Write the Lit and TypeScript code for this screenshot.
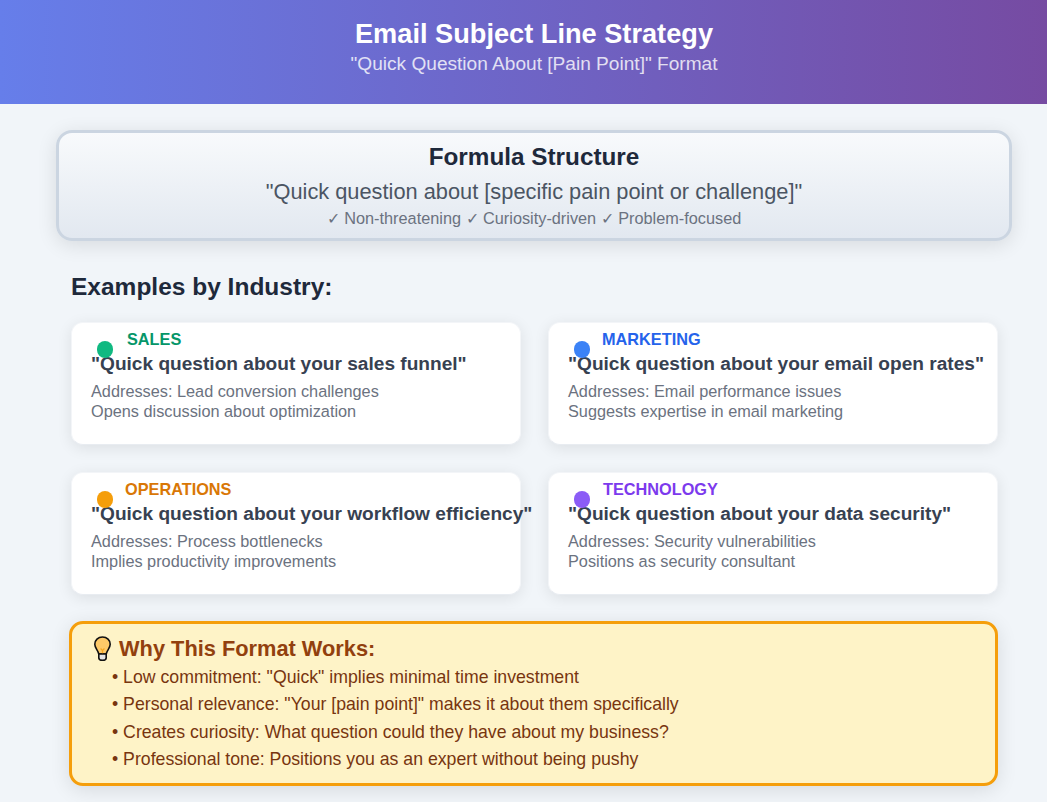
import { LitElement, html, css } from "lit";
import { customElement } from "lit/decorators.js";

const cards = [
  { cls: "green", label: "SALES", title: '"Quick question about your sales funnel"', a: "Addresses: Lead conversion challenges", b: "Opens discussion about optimization" },
  { cls: "blue", label: "MARKETING", title: '"Quick question about your email open rates"', a: "Addresses: Email performance issues", b: "Suggests expertise in email marketing" },
  { cls: "amber", label: "OPERATIONS", title: '"Quick question about your workflow efficiency"', a: "Addresses: Process bottlenecks", b: "Implies productivity improvements" },
  { cls: "violet", label: "TECHNOLOGY", title: '"Quick question about your data security"', a: "Addresses: Security vulnerabilities", b: "Positions as security consultant" },
];

@customElement("app-root")
export class AppRoot extends LitElement {
  static styles = css`
    :host { display: block; height: 802px; overflow: hidden; background: #f1f5f9; font-family: "Liberation Sans", Arial, sans-serif; }
    .hero { height: 104px; box-sizing: border-box; padding: 18px 0 0 21px; text-align: center; color: #fff; background: linear-gradient(90deg, #667eea, #764ba2); }
    .hero h1 { margin: 0; font-size: 27.2px; line-height: 32px; font-weight: 700; }
    .hero p { margin: 0; font-size: 19.1px; line-height: 28px; opacity: .8; }
    .formula { box-sizing: border-box; margin: 26px 35px 0 56px; height: 111px; padding-top: 10px; border: 3px solid #cbd5e1; border-radius: 16px; text-align: center; background: linear-gradient(180deg, #f8fafc, #e2e8f0); box-shadow: 0 4px 20px rgba(0,0,0,.11); }
    .formula h2 { margin: 0; font-size: 24.3px; line-height: 28px; color: #1e293b; }
    .formula .q { margin-top: 8px; font-size: 21.8px; line-height: 26px; color: #4b5563; }
    .formula .t { margin-top: 3px; font-size: 16.3px; line-height: 20px; color: #6b7280; }
    h3 { margin: 31px 0 0 71px; font-size: 24.5px; line-height: 30px; color: #1e293b; }
    .grid { margin: 20px 49px 0 71px; display: grid; grid-template-columns: 450px 450px; column-gap: 27px; row-gap: 27px; }
    .card { position: relative; box-sizing: border-box; height: 123px; padding: 6px 19px 0; background: #fff; border: 1px solid #f3f5f8; border-bottom-color: #e8ecf1; border-radius: 12px; box-shadow: 0 3px 15px rgba(0,0,0,.09); }
    .dot { position: absolute; left: 24.5px; top: 18px; width: 16.5px; height: 16.5px; border-radius: 50%; }
    .label { font-size: 16.3px; line-height: 20px; font-weight: 700; white-space: nowrap; }
    .title { margin-top: 3px; font-size: 19.1px; line-height: 24px; font-weight: 700; color: #374151; white-space: nowrap; }
    .desc { margin-top: 5px; font-size: 16.3px; line-height: 20px; color: #6b7280; }
    .green .dot { background: #10b981; } .green .label { color: #059669; padding-left: 36px; }
    .blue .dot { background: #3b82f6; } .blue .label { color: #2563eb; padding-left: 34px; }
    .amber .dot { background: #f59e0b; } .amber .label { color: #d97706; padding-left: 34px; }
    .violet .dot { background: #8b5cf6; } .violet .label { color: #7c3aed; padding-left: 35px; }
    .why { box-sizing: border-box; margin: 26px 49px 0 69px; height: 165px; padding: 11px 20px 0; border: 3px solid #f59e0b; border-radius: 14px; background: #fef3c7; box-shadow: 0 4px 20px rgba(0,0,0,.11); }
    .why-head { display: flex; align-items: center; gap: 7px; height: 28px; font-size: 21.8px; font-weight: 700; color: #92400e; }
    .why-head svg { display: block; }
    ul { margin: 1px 0 0; padding: 0 0 0 20px; list-style: none; }
    li { font-size: 17.7px; line-height: 27.4px; color: #78350f; }
  `;

  render() {
    return html`
      <header class="hero">
        <h1>Email Subject Line Strategy</h1>
        <p>"Quick Question About [Pain Point]" Format</p>
      </header>
      <section class="formula">
        <h2>Formula Structure</h2>
        <div class="q">"Quick question about [specific pain point or challenge]"</div>
        <div class="t">✓ Non-threatening ✓ Curiosity-driven ✓ Problem-focused</div>
      </section>
      <h3>Examples by Industry:</h3>
      <div class="grid">
        ${cards.map((c) => html`
          <article class="card ${c.cls}">
            <span class="dot"></span>
            <div class="label">${c.label}</div>
            <div class="title">${c.title}</div>
            <div class="desc">${c.a}<br />${c.b}</div>
          </article>`)}
      </div>
      <section class="why">
        <div class="why-head">
          <svg width="20" height="26" viewBox="0 0 20 26">
            <path d="M10.5 1C6 1 2.8 4.1 2.8 8.2c0 3.7 3 5.6 4 9.8h7.4c1-4.2 4-6.1 4-9.8C18.2 4.1 15 1 10.5 1z" fill="#fdc968" stroke="#111" stroke-width="1.6"/>
            <path d="M8.6 12.5l1.9 2.2 1.9-2.2M10.5 14.7V18" fill="none" stroke="#f5a623" stroke-width="1.2"/>
            <path d="M6.8 18h7.4v4c0 1.4-1.6 2.3-3.7 2.3S6.8 23.4 6.8 22z" fill="#e4e4e4" stroke="#111" stroke-width="1.6"/>
          </svg>
          <span>Why This Format Works:</span>
        </div>
        <ul>
          <li>• Low commitment: "Quick" implies minimal time investment</li>
          <li>• Personal relevance: "Your [pain point]" makes it about them specifically</li>
          <li>• Creates curiosity: What question could they have about my business?</li>
          <li>• Professional tone: Positions you as an expert without being pushy</li>
        </ul>
      </section>
    `;
  }
}
